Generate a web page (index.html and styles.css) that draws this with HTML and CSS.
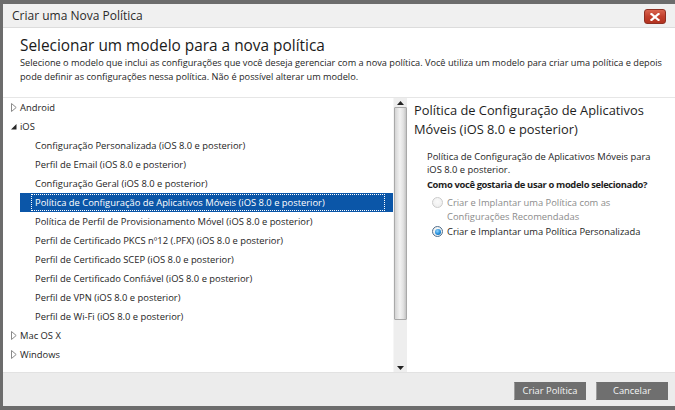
FILE: index.html
```html
<!DOCTYPE html>
<html lang="pt-BR">
<head>
<meta charset="utf-8">
<title>Criar uma Nova Política</title>
<link rel="stylesheet" href="styles.css">
</head>
<body>
<div class="dialog">
  <div class="titlebar">
    <span class="title">Criar uma Nova Política</span>
    <button class="close" aria-label="Fechar">
      <svg width="10" height="8" viewBox="0 0 10 8"><path d="M1.5 1 L8.5 7 M8.5 1 L1.5 7" stroke="#fff" stroke-width="2.2" stroke-linecap="square"/></svg>
    </button>
  </div>
  <div class="header">
    <h1 class="heading">Selecionar um modelo para a nova política</h1>
    <p class="desc">Selecione o modelo que inclui as configurações que você deseja gerenciar com a nova política. Você utiliza um modelo para criar uma política e depois<br>pode definir as configurações nessa política. Não é possível alterar um modelo.</p>
  </div>
  <div class="main">
    <div class="tree">
      <ul class="tree-list">
        <li class="node"><span class="twisty"><svg width="6" height="9" viewBox="0 0 6 9"><path d="M0.5 0.5 L5.2 4.5 L0.5 8.5 Z" fill="none" stroke="#8a8a8a"/></svg></span>Android</li>
        <li class="node"><span class="twisty"><svg width="6" height="9" viewBox="0 0 6 9"><path d="M5.5 2 L5.5 7.5 L0 7.5 Z" fill="#262626"/></svg></span>iOS</li>
        <li class="leaf"><span class="label">Configuração Personalizada (iOS 8.0 e posterior)</span></li>
        <li class="leaf"><span class="label">Perfil de Email (iOS 8.0 e posterior)</span></li>
        <li class="leaf"><span class="label">Configuração Geral (iOS 8.0 e posterior)</span></li>
        <li class="leaf selected"><span class="label">Política de Configuração de Aplicativos Móveis (iOS 8.0 e posterior)</span></li>
        <li class="leaf"><span class="label">Política de Perfil de Provisionamento Móvel (iOS 8.0 e posterior)</span></li>
        <li class="leaf"><span class="label">Perfil de Certificado PKCS nº12 (.PFX) (iOS 8.0 e posterior)</span></li>
        <li class="leaf"><span class="label">Perfil de Certificado SCEP (iOS 8.0 e posterior)</span></li>
        <li class="leaf"><span class="label">Perfil de Certificado Confiável (iOS 8.0 e posterior)</span></li>
        <li class="leaf"><span class="label">Perfil de VPN (iOS 8.0 e posterior)</span></li>
        <li class="leaf"><span class="label">Perfil de Wi-Fi (iOS 8.0 e posterior)</span></li>
        <li class="node"><span class="twisty"><svg width="6" height="9" viewBox="0 0 6 9"><path d="M0.5 0.5 L5.2 4.5 L0.5 8.5 Z" fill="none" stroke="#8a8a8a"/></svg></span>Mac OS X</li>
        <li class="node"><span class="twisty"><svg width="6" height="9" viewBox="0 0 6 9"><path d="M0.5 0.5 L5.2 4.5 L0.5 8.5 Z" fill="none" stroke="#8a8a8a"/></svg></span>Windows</li>
      </ul>
    </div>
    <div class="scrollbar">
      <div class="sb-btn"><svg width="7" height="4" viewBox="0 0 7 4"><path d="M0 4 L3.5 0 L7 4 Z" fill="#222"/></svg></div>
      <div class="sb-track"><div class="sb-thumb"></div></div>
      <div class="sb-btn"><svg width="7" height="4" viewBox="0 0 7 4"><path d="M0 0 L7 0 L3.5 4 Z" fill="#222"/></svg></div>
    </div>
    <div class="details">
      <h2 class="details-title">Política de Configuração de Aplicativos Móveis (iOS 8.0 e posterior)</h2>
      <div class="details-body">
        <p class="details-text">Política de Configuração de Aplicativos Móveis para<br>iOS 8.0 e posterior.</p>
        <p class="question">Como você gostaria de usar o modelo selecionado?</p>
        <div class="option disabled"><span class="radio"></span><span class="option-label">Criar e Implantar uma Política com as<br>Configurações Recomendadas</span></div>
        <div class="option checked"><span class="radio"><span class="dot"></span></span><span class="option-label">Criar e Implantar uma Política Personalizada</span></div>
      </div>
    </div>
  </div>
  <div class="footer">
    <button class="btn">Criar Política</button>
    <button class="btn">Cancelar</button>
  </div>
</div>
</body>
</html>
```
FILE: styles.css
```css
* { box-sizing: border-box; }
html, body { margin: 0; padding: 0; }
body {
  width: 675px;
  height: 410px;
  overflow: hidden;
  background: #6c6c6c;
  font-family: "Open Sans", "Noto Sans", sans-serif;
  color: #1e1e1e;
}
.dialog {
  margin: 4px 0 0 3px;
  height: 402px;
  background: #fff;
  display: flex;
  flex-direction: column;
}
.titlebar {
  height: 24px;
  flex: none;
  background: #f0f0f0;
  border-bottom: 1px solid #dcdcdc;
  display: flex;
  align-items: center;
  justify-content: space-between;
  padding: 0 9px 0 9px;
}
.title { font-size: 12px; color: #2b2b2b; line-height: 16px; }
.close {
  width: 22px;
  height: 15px;
  margin-top: 2px;
  padding: 0;
  border: 1px solid #8e2f22;
  border-radius: 3px;
  background: linear-gradient(#d9644f, #c2402d 50%, #b3331f);
  display: flex;
  align-items: center;
  justify-content: center;
}
.close svg { display: block; }
.header {
  height: 69px;
  flex: none;
  padding: 8px 0 0 17px;
}
.heading {
  margin: 0;
  font-size: 15.4px;
  font-weight: 400;
  line-height: 20px;
  color: #1a1a1a;
}
.desc {
  margin: 0;
  font-size: 9.2px;
  line-height: 14px;
  color: #1e1e1e;
}
.main {
  flex: 1;
  display: flex;
  border-top: 1px solid #e6e6e6;
  min-height: 0;
}
.tree { width: 390px; flex: none; }
.tree-list { list-style: none; margin: 0; padding: 0; }
.tree-list li {
  height: 19px;
  font-size: 9.4px;
  line-height: 19px;
  white-space: nowrap;
}
.node {
  display: flex;
  align-items: center;
  padding-left: 8px;
}
.twisty {
  width: 9px;
  height: 19px;
  display: flex;
  align-items: center;
}
.twisty svg { display: block; }
.leaf { margin-left: 17px; padding-left: 11px; }
.leaf .label { display: block; padding-left: 4px; height: 19px; }
.leaf.selected { background: #0b56a8; color: #fff; padding-top: 1px; padding-bottom: 1px; }
.leaf.selected .label {
  height: 17px;
  line-height: 17px;
  margin-right: 8px;
  outline: 1px dotted #fff;
  outline-offset: -1px;
}
.scrollbar {
  width: 14px;
  flex: none;
  background: #eeeeee;
  border-left: 1px solid #f6f6f6;
  display: flex;
  flex-direction: column;
}
.sb-btn {
  height: 9px;
  flex: none;
  display: flex;
  align-items: center;
  justify-content: center;
}
.sb-btn svg { display: block; }
.sb-track { flex: 1; }
.sb-thumb {
  height: 213px;
  border: 1px solid #a9a9a9;
  border-radius: 1px;
  background: linear-gradient(to right, #d4d4d4, #f2f2f2 45%, #e2e2e2 75%, #c4c4c4);
}
.details {
  flex: 1;
  padding: 3px 6px 0 7px;
}
.details-title {
  margin: 0;
  font-size: 12.85px;
  font-weight: 400;
  line-height: 19px;
  color: #1e1e1e;
}
.details-body { padding-left: 13px; margin-top: 11px; }
.details-text { margin: 0; font-size: 9.4px; line-height: 13px; }
.question {
  margin: 2px 0 0;
  font-size: 9.4px;
  line-height: 13px;
  font-weight: 700;
  letter-spacing: -0.35px;
}
.option {
  display: flex;
  align-items: flex-start;
  font-size: 9.4px;
  line-height: 13.5px;
  margin-top: 5px;
}
.option + .option { margin-top: 2px; }
.radio {
  width: 11px;
  height: 11px;
  margin: 1px 4px 0 5px;
  flex: none;
  border-radius: 50%;
  border: 1px solid #b9b9b9;
  background: radial-gradient(circle at 50% 40%, #ffffff, #e4e4e4);
  display: flex;
  align-items: center;
  justify-content: center;
}
.disabled { color: #8c8c8c; }
.disabled .radio { border-color: #cbcbcb; background: radial-gradient(circle at 50% 40%, #fafafa, #ebebeb); }
.checked .radio { border-color: #4f6e8c; }
.dot {
  width: 6px;
  height: 6px;
  border-radius: 50%;
  background: radial-gradient(circle at 40% 35%, #8fd3ff, #1a87d6 60%, #0d5ea6);
}
.footer {
  height: 34px;
  flex: none;
  background: #ececec;
  border-top: 1px solid #e2e2e2;
  display: flex;
  justify-content: flex-end;
  align-items: flex-start;
  gap: 10px;
  padding: 9px 7px 0 0;
}
.btn {
  width: 72px;
  height: 18px;
  padding: 0;
  border: 1px solid #6f6f6f;
  border-left-color: #9c9c9c;
  background: #6f6f6f;
  color: #f5f5f5;
  font-family: "Open Sans", "Noto Sans", sans-serif;
  font-size: 9.4px;
  line-height: 16px;
}
```
